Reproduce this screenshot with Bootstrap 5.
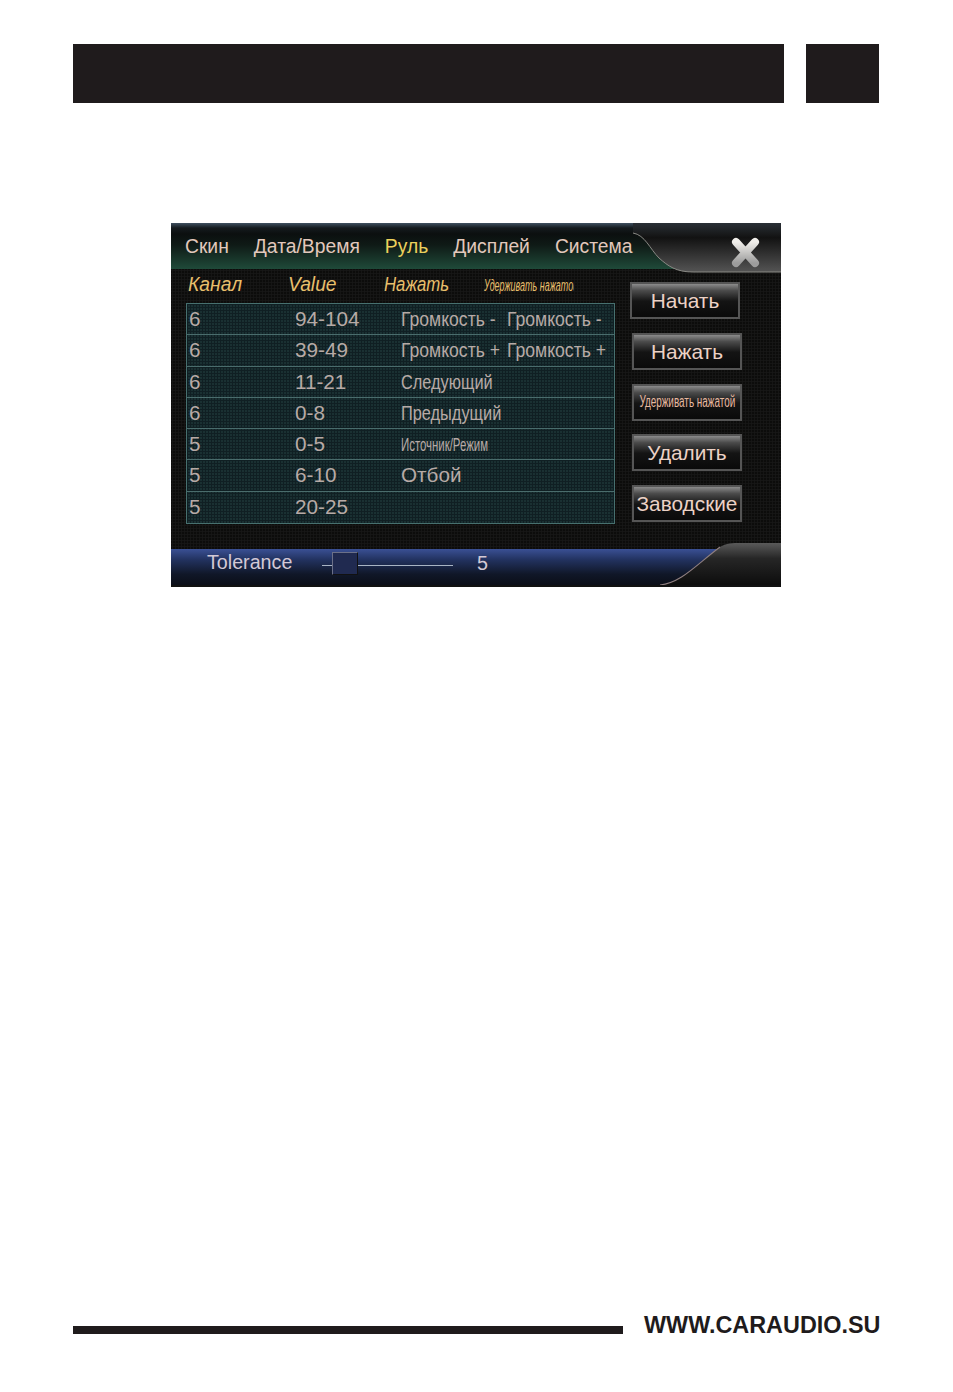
<!DOCTYPE html>
<html lang="ru"><head><meta charset="utf-8"><title>Руль</title>
<link rel="stylesheet" href="https://cdn.jsdelivr.net/npm/bootstrap@5.3.0/dist/css/bootstrap.min.css">
<style>
html,body{background:#fff;margin:0}
body{font-family:"Liberation Sans",Arial,sans-serif}
.sheet{width:953px;height:1392px;padding:44px 74px 0 73px;overflow:hidden}
.hd-main{height:59px;width:711px;background:#1f1b1c}
.hd-side{height:59px;width:73px;background:#1f1b1c;margin-left:22px}
.screen{position:relative;width:610px;height:364px;margin:120px 0 0 98px;background:#0c0c0b;overflow:hidden;color:#d9c0b4}
.tabs{height:46px;padding:2px 0 0 14px;gap:25px;font-size:19.3px;align-items:center;background:linear-gradient(#3f5060 0,#141a1e 5px,#0b0f0f 11px,#0f1a16 22px,#1f4a39 46px)}
.tab-on{color:#ecd05c}
.tab-off{color:#e2c8bc}
.work{height:280px;background-image:radial-gradient(#171717 45%,transparent 55%);background-size:3px 3px}
.left-col{width:429px;margin-left:15px}
.heads{height:34px;font-style:italic;font-size:19.3px;line-height:24px;color:#e8bf6c;padding-top:4px}
.hcell{padding-left:2px}
.hc1{width:100px}
.hc2{width:96px}
.hc3{width:100px}
.squeeze{display:inline-block;transform-origin:left center;white-space:nowrap}
.sq-press{transform:scaleX(.87)}
.sq-head{font-size:16px;transform:scaleX(.56)}
.clip-head{width:92px;padding-left:2px;overflow:hidden;white-space:nowrap}
.grid-box{border:1px solid #47706f;background-color:#1a3032;background-image:linear-gradient(90deg,#101f23 1px,transparent 1px),linear-gradient(#101f23 1px,transparent 1px);background-size:3px 3px}
.grid-row{height:31.3px;border-bottom:1px solid #4a6c6c;font-size:20.7px;line-height:29px;color:#b7aaa6}
.grid-row:last-child{border-bottom:0}
.c1{width:108px;padding-left:2px}
.c2{width:106px}
.c3{width:106px;white-space:nowrap}
.sq-vol{transform:scaleX(.85)}
.sq-next{transform:scaleX(.79)}
.sq-cell{font-size:19px;transform:scaleX(.6)}
.btn-col{width:120px;margin-left:15px;padding-top:13px}
.hw-btn{display:block;width:110px;height:37px;padding:0;margin:0 0 13.8px 2px;border:2px solid #555;border-radius:0;background:linear-gradient(#8b8b8b 0,#4b4b4b 20%,#141414 52%,#0a0a0a 100%);color:#ecd2c6;font-size:20.8px;line-height:29px;white-space:nowrap;overflow:hidden;text-align:center}
.hw-btn:hover{background:linear-gradient(#8b8b8b 0,#4b4b4b 20%,#141414 52%,#0a0a0a 100%);color:#ecd2c6;border-color:#555}
.first-btn{margin-left:0}
.sq-btn{flex:none;font-size:16px;line-height:30px;color:#e8b9a0;transform:scaleX(.62);transform-origin:center}
.sq-box{display:flex;justify-content:center}
.bar{position:relative;height:36px;padding-bottom:4px;background:linear-gradient(#3a5094 0,#22325f 30%,#101728 70%,#0b0e18 100%);font-size:19.7px;color:#d3c9d6;align-items:center}
.bar-label{margin:0 0 4px 36px;width:115px}
.track{position:relative;width:131px;height:1px;background:#a8b4c4}
.thumb{position:absolute;left:10px;top:-13px;width:26px;height:23px;background:#202a50;border:1px solid #6b7088;border-right-color:#111;border-bottom-color:#111}
.bar-val{margin:0 0 3px 24px}
.over{position:absolute;left:0;top:0;pointer-events:none}
.foot{margin-top:725px;width:810px;align-items:center}
.foot-line{width:550px;height:8px;background:#1f1b1c;margin-top:10px}
.foot-txt{font-weight:700;font-size:23.4px;line-height:26px;color:#1f1b1c;margin-left:21px;white-space:nowrap}
</style></head><body>
<div class="sheet">
  <div class="d-flex"><div class="hd-main"></div><div class="hd-side"></div></div>
  <div class="screen">
    <div class="tabs d-flex"><span class="tab-off">Скин</span><span class="tab-off">Дата/Время</span><span class="tab-on">Руль</span><span class="tab-off">Дисплей</span><span class="tab-off">Система</span></div>
    <div class="work d-flex">
      <div class="left-col">
        <div class="heads d-flex">
          <div class="hcell hc1">Канал</div><div class="hcell hc2">Value</div><div class="hcell hc3"><span class="squeeze sq-press">Нажать</span></div>
          <div class="clip-head"><span class="squeeze sq-head">Удерживать нажатой</span></div>
        </div>
        <div class="grid-box">
          <div class="grid-row d-flex"><div class="c1">6</div><div class="c2">94-104</div><div class="c3"><span class="squeeze sq-vol">Громкость -</span></div><div class="c3"><span class="squeeze sq-vol">Громкость -</span></div></div>
          <div class="grid-row d-flex"><div class="c1">6</div><div class="c2">39-49</div><div class="c3"><span class="squeeze sq-vol">Громкость +</span></div><div class="c3"><span class="squeeze sq-vol">Громкость +</span></div></div>
          <div class="grid-row d-flex"><div class="c1">6</div><div class="c2">11-21</div><div class="c3"><span class="squeeze sq-next">Следующий</span></div></div>
          <div class="grid-row d-flex"><div class="c1">6</div><div class="c2">0-8</div><div class="c3"><span class="squeeze sq-next">Предыдущий</span></div></div>
          <div class="grid-row d-flex"><div class="c1">5</div><div class="c2">0-5</div><div class="c3"><span class="squeeze sq-cell">Источник/Режим</span></div></div>
          <div class="grid-row d-flex"><div class="c1">5</div><div class="c2">6-10</div><div class="c3">Отбой</div></div>
          <div class="grid-row d-flex"><div class="c1">5</div><div class="c2">20-25</div></div>
        </div>
      </div>
      <div class="btn-col">
        <button class="btn hw-btn first-btn" type="button">Начать</button>
        <button class="btn hw-btn" type="button">Нажать</button>
        <button class="btn hw-btn" type="button"><span class="sq-box"><span class="squeeze sq-btn">Удерживать нажатой</span></span></button>
        <button class="btn hw-btn" type="button">Удалить</button>
        <button class="btn hw-btn" type="button">Заводские</button>
      </div>
    </div>
    <div class="bar d-flex">
      <div class="bar-label">Tolerance</div>
      <div class="track"><div class="thumb"></div></div>
      <div class="bar-val">5</div>
    </div>
    <svg class="over" width="610" height="364" viewBox="0 0 610 364" aria-hidden="true">
      <defs>
        <linearGradient id="gt" x1="0" y1="0" x2="0" y2="1"><stop offset="0" stop-color="#2a3036"/><stop offset=".3" stop-color="#121212"/><stop offset="1" stop-color="#545454"/></linearGradient>
        <linearGradient id="gb" x1="0" y1="0" x2="0" y2="1"><stop offset="0" stop-color="#5a5a5a"/><stop offset=".35" stop-color="#262626"/><stop offset="1" stop-color="#0b0b0b"/></linearGradient>
        <linearGradient id="gx" x1="0" y1="0" x2="0" y2="1"><stop offset="0" stop-color="#f0eeea"/><stop offset="1" stop-color="#9c9c9c"/></linearGradient>
      </defs>
      <path d="M462 10C474 12 479 26 488 35C497 43 505 49 522 49L610 49L610 0L462 0Z" fill="url(#gt)"/>
      <path d="M462 10C474 12 479 26 488 35C497 43 505 49 522 49L610 49" fill="none" stroke="#8a8a85" stroke-width="1"/>
      <path d="M565 19L584 40M584 19L565 40" stroke="url(#gx)" stroke-width="8" stroke-linecap="round" fill="none"/>
      <path d="M489 362C510 360 525 342 549 324C555 320 562 320 570 320L610 320L610 364L489 364Z" fill="url(#gb)"/>
      <path d="M489 362C510 360 525 342 549 324" fill="none" stroke="#8f7f80" stroke-width="1.1"/>
      <rect x="0" y="362" width="610" height="2" fill="#111"/>
    </svg>
  </div>
  <div class="foot d-flex"><div class="foot-line"></div><div class="foot-txt">WWW.CARAUDIO.SU</div></div>
</div>
<script src="https://cdn.jsdelivr.net/npm/bootstrap@5.3.0/dist/js/bootstrap.bundle.min.js"></script>
</body></html>
